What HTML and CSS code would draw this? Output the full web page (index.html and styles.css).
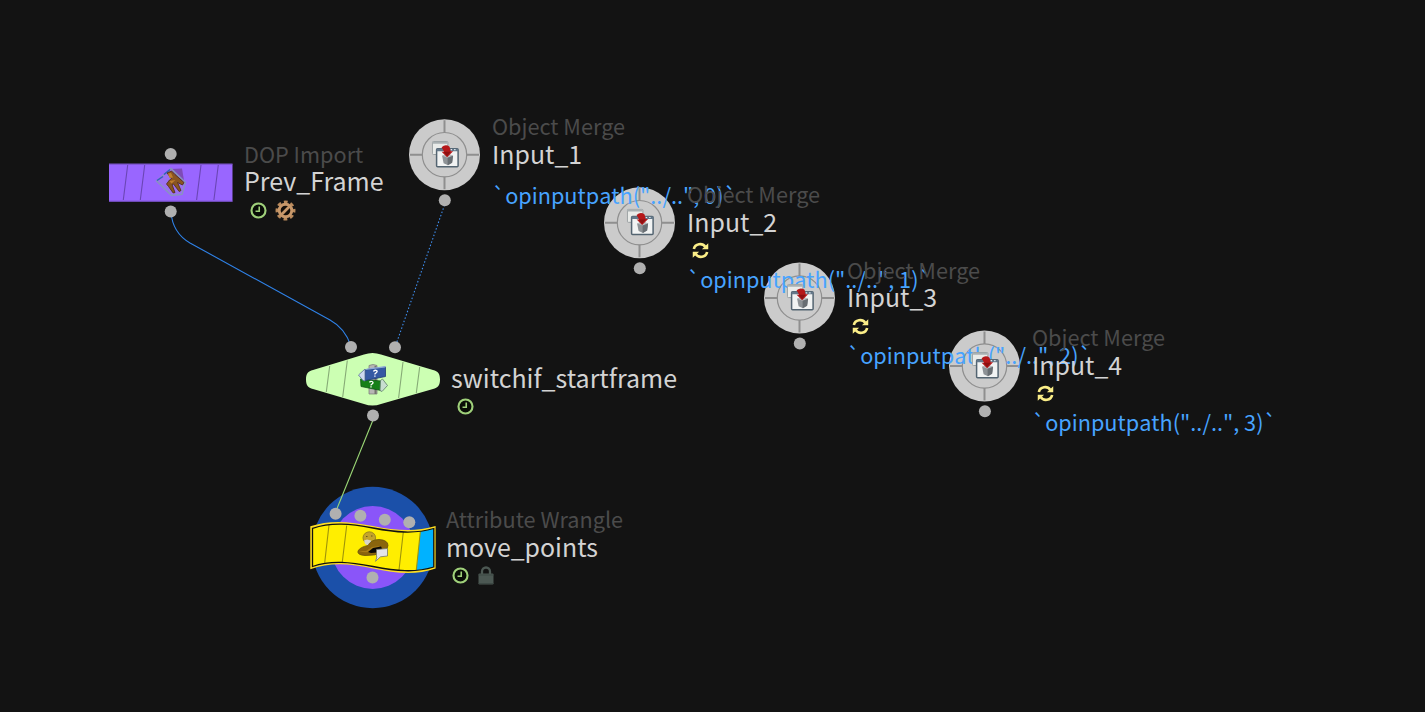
FILE: index.html
```html
<!DOCTYPE html>
<html lang="en">
<head>
<meta charset="utf-8">
<title>Network view</title>
<link rel="stylesheet" href="styles.css">
</head>
<body>
<svg class="defs" width="0" height="0">
  <defs>
    <symbol id="disc" viewBox="0 0 74 74">
      <circle cx="37" cy="37" r="35.5" fill="#cbcbcb"/>
      <g fill="none" stroke="#8f8f8f" stroke-width="1.2">
        <circle cx="37" cy="37" r="22.2"/>
        <path stroke-width="2" d="M37 2.500V15M37 59V71.500M2.500 37H15M59 37H71.500"/>
      </g>
    </symbol>
    <symbol id="merge" viewBox="0 0 28 28">
      <rect x=".8" y=".8" width="15.500" height="13" rx="1" fill="#e9ebe9" stroke="#9aa0a2"/>
      <path d="M1 2h15" stroke="#a9b0b2" stroke-width="2"/>
      <rect x="5" y="8" width="21.500" height="18" rx="1" fill="#f1f3f3" stroke="#536471" stroke-width="1.500"/>
      <path d="M5 9.200h21.500" stroke="#64788a" stroke-width="2.500"/>
      <path d="M19 9h1.500M22.500 9h1.500" stroke="#dfe8ee" stroke-width="1.200"/>
      <path d="M10.500 15l5-2 6 2-1 7-4 2.500-4.500-2z" fill="#8d9296"/>
      <path d="M10.500 15l5.500 2 5.500-2-5-2z" fill="#b9bdc0"/>
      <path d="M16 17v7.500l4.500-2.500 1-7z" fill="#686e73"/>
      <path d="M10 6.500q4-3.500 8-.5l1 4.500h2.500l-6 6-5.500-5.500h2.500z" fill="#b5181a"/>
      <path d="M12 11l7 0-3.500 4.500z" fill="#8d1012"/>
    </symbol>
    <symbol id="clock" viewBox="0 0 16 16">
      <circle cx="8" cy="8" r="6.600" fill="#080c06" stroke="#9fd07a" stroke-width="2"/>
      <path d="M8.700 4.300v4.400H5.200" fill="none" stroke="#9fd07a" stroke-width="1.500"/>
    </symbol>
    <symbol id="gear" viewBox="0 0 20 20">
      <circle cx="10" cy="10" r="8.200" fill="none" stroke="#b98a5c" stroke-width="2.600" stroke-dasharray="3.600 2.840" stroke-dashoffset="1.800"/>
      <circle cx="10" cy="10" r="6" fill="#130e09" stroke="#c8986a" stroke-width="2.800"/>
      <path d="M6 14l8-8" stroke="#c8986a" stroke-width="2.600"/>
    </symbol>
    <symbol id="refresh" viewBox="0 0 18 18">
      <g fill="none" stroke="#fbee88" stroke-width="2.800">
        <path d="M2 7.500C3.200 1.500 11 .8 14 5"/>
        <path d="M16 10.500C14.800 16.500 7 17.200 4 13"/>
      </g>
      <path d="M17.200 1.200v6.600h-6.700zM.8 16.800v-6.600h6.700z" fill="#fbee88"/>
    </symbol>
    <symbol id="lock" viewBox="0 0 16 19">
      <path d="M4 9V5.500a4 4 0 0 1 8 0V9" fill="none" stroke="#4c5853" stroke-width="2.300"/>
      <rect x=".5" y="7.500" width="15" height="11" rx="1" fill="#4c5853"/>
      <path d="M.5 9h15M.5 17.500h15" stroke="#3d4945" stroke-width="1.200"/>
    </symbol>
  </defs>
</svg>

<main class="network">
  <svg class="layer" viewBox="0 0 1425 712">
    <!-- wires -->
    <g fill="none" stroke-width="1.100">
      <path stroke="#2f82e8" d="M171 212C172 226 178 236 190 243L330 320C341 326 347 334 351 346"/>
      <path stroke="#3f8ff0" stroke-dasharray="1.500 2" d="M444.500 205L395.500 346"/>
    </g>

    <!-- Prev_Frame -->
    <rect x="109" y="163.700" width="123.500" height="38" fill="#9966ff"/>
    <path d="M109 164.200h123.500M109 201.200h123.500" stroke="#6e4bb5" stroke-width=".8"/>
    <path class="rib rib-purple" d="M127.700 165l-4.400 35M144.700 165l-4.400 35M201 165l-4.400 35M218.300 165l-4.400 35"/>

    <!-- switchif_startframe -->
    <path fill="#ccffb3" d="M306 379.500C306 373.500 308 371.500 313 370L364 354.500Q372.500 351.500 381 354.500L433 370C438 371.500 440 373.500 440 379.500C440 385.500 438 387.500 433 389L381 404Q372.500 407 364 404L313 389C308 387.500 306 385.500 306 379.500Z"/>
    <path class="rib rib-green" d="M329.700 366l-3.400 26M347.300 360.500l-4.600 36.500M403 362l-4.400 36M419.700 367l-3.400 26"/>

    <!-- move_points -->
    <circle cx="372.700" cy="547.500" r="60.700" fill="#1b50a9"/>
    <circle cx="372.700" cy="547.500" r="41.500" fill="#8a55f9"/>
    <path fill="none" stroke="#9bd876" stroke-width="1.100" d="M373 420L336 511"/>
    <path fill="#ffdf22" d="M310.300 526.300C330 519.500 350 521.500 373 526S416 532 435.600 526V568.500C416 575.500 396 573.500 373 568.500S330 562 310.300 569.200Z"/>
    <path fill="#ffee00" d="M312.500 528.300C331 522 350 523.500 373 528S415 534 433.800 528.500V567C415 573 396 571 373 566.500S331 560 312.500 566.500Z"/>
    <path fill="#00b2ff" d="M420.500 531.500Q428 530.500 433.800 528.500V567Q425 570 416.300 570.300Z"/>
    <path class="rib rib-yellow" d="M329 525l-4.300 37.700M346.700 525.500l-4.400 36.500M403.300 532l-4.300 38M420.300 532l-4 38"/>
    <path fill="none" stroke="#111" stroke-width="1.300" d="M312.500 528.300C331 522 350 523.500 373 528S415 534 433.800 528.500V567C415 573 396 571 373 566.500S331 560 312.500 566.500Z"/>

    <!-- Object merges -->
    <use href="#disc" x="407.500" y="117.700" width="74" height="74"/>
    <use href="#disc" x="602.500" y="185.700" width="74" height="74"/>
    <use href="#disc" x="762.500" y="261" width="74" height="74"/>
    <use href="#disc" x="947.500" y="329" width="74" height="74"/>

    <!-- connectors -->
    <g fill="#b0b0b0">
      <circle cx="170.700" cy="154" r="6"/><circle cx="170.700" cy="211.500" r="6"/>
      <circle cx="444.800" cy="200.300" r="6"/><circle cx="639.800" cy="268.200" r="6"/>
      <circle cx="799.800" cy="343.500" r="6"/><circle cx="984.900" cy="411.300" r="6"/>
      <circle cx="351" cy="347" r="6"/><circle cx="395" cy="347.200" r="6"/><circle cx="373" cy="415.500" r="6"/>
      <circle cx="335.600" cy="513.700" r="6"/><circle cx="360.400" cy="515.700" r="6"/>
      <circle cx="384.800" cy="519.700" r="6"/><circle cx="409.300" cy="522.200" r="6"/><circle cx="372.500" cy="577.500" r="6"/>
    </g>
  </svg>

  <div class="comment c1">`opinputpath("../..", 0)`</div>
  <div class="comment c2">`opinputpath("../..", 1)`</div>
  <div class="comment c3">`opinputpath("../..", 2)`</div>
  <div class="comment c4">`opinputpath("../..", 3)`</div>

  <svg class="layer" viewBox="0 0 1425 712">
    <use href="#merge" x="431.600" y="140.700" width="28" height="28"/>
    <use href="#merge" x="626.600" y="208.500" width="28" height="28"/>
    <use href="#merge" x="786.600" y="283.800" width="28" height="28"/>
    <use href="#merge" x="971.600" y="351.700" width="28" height="28"/>

    <!-- DOP import: box-caged chair -->
    <g>
      <path d="M171 169l11-.5 2 12-6 1z" fill="#75439f" opacity=".75"/>
      <path d="M156.500 181L171 168.500 185.500 182.500 182 194.500 171.500 195.500Z" fill="#a38bd0" fill-opacity=".3" stroke="#8795bd" stroke-width="1.300"/>
      <path d="M157 180.500l6-4M164 174.500l6-5" stroke="#315bc0" stroke-width="1.500"/>
      <path d="M167 173l4.500-2 3.500 3.500 9 8-1.500 2.500-5-2.500 3.500 8-1.800 1-5.700-7.500-1.500.5 3 8-1.800.5-4.700-6.500-2-2.500 3-4 2-1.500z" fill="#8a5520" stroke="#4c2c12" stroke-width=".8"/>
      <path d="M168 173.500l3-.5 2 4.500-3.500.5zM169.500 181l6-1-4 3.500z" fill="#bf7e2c"/>
    </g>

    <!-- signpost -->
    <g stroke-linejoin="round">
      <path d="M369 365.500q4-2 8 0V394h-8z" fill="#b7b7b4" stroke="#777" stroke-width=".7"/>
      <path d="M374.500 366v28h2v-28z" fill="#74766f"/>
      <path d="M360.500 379l20.500 2v9.500L361 386.500z" fill="#168018" stroke="#0b4d12" stroke-width=".7"/>
      <path d="M380.500 380.500l2-1.500 5 6.500-5.500 6-2-1z" fill="#c8ded0" stroke="#5c7e67" stroke-width=".8"/>
      <path d="M365 370l20.500-3v9.500L365 380.500z" fill="#3559a3" stroke="#203c76" stroke-width=".8"/>
      <path d="M365 370l2-1.500 18.500-2.500v1.500z" fill="#8ea9da"/>
      <path d="M365 369l-6.500 6 4.500 5.500 2 .5z" fill="#ced9ee" stroke="#5b719b" stroke-width=".8"/>
      <g fill="none" stroke="#fff" stroke-width="1.300">
        <path d="M373.500 371.500q.5-1.500 2.500-1.200 2 .7.500 2.200l-1.500 1.200v.8M374.900 375.500v1.200"/>
        <path d="M369.500 382.300q.8-1.300 2.500-.8 1.900.9.300 2.300l-1.200 1v.6M371 386.300v1.200"/>
      </g>
    </g>

    <!-- wrangle: cowboy hat with speech bubble -->
    <g>
      <ellipse cx="369.300" cy="537.800" rx="6.300" ry="6" fill="#c4a42c" stroke="#8d7a1d" stroke-width=".8"/>
      <path d="M366 536.500h1.500M371 536h1.500" stroke="#665719"/>
      <path d="M364 540.500l3-1 4 1 1 3-4 2-3-1.500z" fill="#d7d4c7"/>
      <path d="M358 551q2-4 10-5.500 3-6 11-6 9 .5 9 6 0 4-5 6.500-8 4-18 3.500-8-.5-7-4.500z" fill="#8a650d" stroke="#66500b" stroke-width=".8"/>
      <path d="M359 551q8 3 17-1l4-4-8 1-6 4z" fill="#aa7e18"/>
      <path d="M368 552l5-4 8-1.500 1 2-5 4-6 .5z" fill="#090806"/>
      <path d="M376.500 549.500l11-1v7.500l-7 .8-5 4.500 1.500-4.500h-.5z" fill="#e4e5e9" stroke="#777968" stroke-width=".8"/>
    </g>
  </svg>

  <section class="label snug l-prev">
    <div class="kind">DOP Import</div><div class="name">Prev_Frame</div>
    <div class="badges"><svg class="clock"><use href="#clock"/></svg><svg class="gear"><use href="#gear"/></svg></div>
  </section>
  <section class="label l-in1">
    <div class="kind">Object Merge</div><div class="name">Input_1</div>
  </section>
  <section class="label l-in2">
    <div class="kind">Object Merge</div><div class="name">Input_2</div>
    <div class="badges"><svg class="refresh"><use href="#refresh"/></svg></div>
  </section>
  <section class="label snug l-in3">
    <div class="kind">Object Merge</div><div class="name">Input_3</div>
    <div class="badges"><svg class="refresh"><use href="#refresh"/></svg></div>
  </section>
  <section class="label l-in4">
    <div class="kind">Object Merge</div><div class="name">Input_4</div>
    <div class="badges"><svg class="refresh"><use href="#refresh"/></svg></div>
  </section>
  <section class="label l-switch">
    <div class="name">switchif_startframe</div>
    <div class="badges"><svg class="clock"><use href="#clock"/></svg></div>
  </section>
  <section class="label l-move">
    <div class="kind">Attribute Wrangle</div><div class="name">move_points</div>
    <div class="badges"><svg class="clock"><use href="#clock"/></svg><svg class="lock"><use href="#lock"/></svg></div>
  </section>
</main>
</body>
</html>
```
FILE: styles.css
```css
body {
  margin: 0;
  background: #131313;
  font-family: "Noto Sans CJK SC", "Noto Sans", sans-serif;
}

.defs { position: absolute; }

.network {
  position: relative;
  width: 1425px;
  height: 712px;
  overflow: hidden;
}

.layer {
  position: absolute;
  inset: 0;
  width: 1425px;
  height: 712px;
}

.rib { fill: none; stroke-width: 1.1; }
.rib-purple { stroke: #6a46b4; }
.rib-green { stroke: #86aa76; }
.rib-yellow { stroke: #9e930a; }

.label, .comment { position: absolute; white-space: nowrap; }

.kind {
  box-sizing: border-box;
  height: 28px;
  padding-top: 1px;
  color: #4b4b4b;
  font-size: 21.7px;
  line-height: 28px;
}
.snug .kind { padding-top: 2px; }
.comment { color: #47a3ff; font-size: 21.7px; line-height: 28px; font-kerning: none; }
.name { color: #d3d3d3; font-size: 25px; line-height: 28px; }

.badges {
  display: flex;
  align-items: center;
  gap: 9px;
  height: 31px;
  padding-left: 6px;
}
.snug .badges { height: 33px; }

.clock { width: 17px; height: 17px; }
.gear { width: 21px; height: 21px; margin-left: -1px; }
.refresh { width: 17px; height: 17px; margin-left: -1px; }
.lock { width: 16px; height: 19px; }

.l-prev { left: 244px; top: 138px; }
.l-in1 { left: 492px; top: 111px; }
.l-in2 { left: 687px; top: 179px; }
.l-in3 { left: 847px; top: 254px; }
.l-in4 { left: 1032px; top: 322px; }
.l-switch { left: 451px; top: 363px; }
.l-move { left: 446px; top: 504px; }
.l-in1 .name, .l-in2 .name, .l-in3 .name, .l-in4 .name, .l-move .name { font-size: 24.9px; }

.c1 { left: 492px; top: 181px; }
.c2 { left: 687px; top: 265px; }
.c3 { left: 847px; top: 341px; }
.c4 { left: 1032px; top: 408px; }
```
